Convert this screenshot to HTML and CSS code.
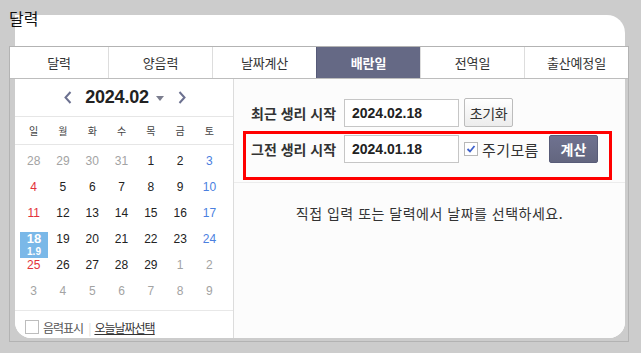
FILE: index.html
```html
<!DOCTYPE html>
<html lang="ko">
<head>
<meta charset="utf-8">
<title>달력</title>
<link rel="stylesheet" href="styles.css">
</head>
<body>
<div class="window">
  <h1 class="title">달력</h1>
  <div class="frame">
    <ul class="tabs">
      <li class="first">달력</li>
      <li>양음력</li>
      <li>날짜계산</li>
      <li class="on">배란일</li>
      <li>전역일</li>
      <li>출산예정일</li>
    </ul>
    <div class="body">
      <div class="cal">
        <div class="cal-head">
          <span class="nav"><svg width="8" height="13" viewBox="0 0 8 13"><polyline points="6.5,1 1.5,6.5 6.5,12" fill="none" stroke="#6c7190" stroke-width="2"/></svg></span>
          <span class="ym">2024.02</span>
          <span class="caret"></span>
          <span class="nav"><svg width="8" height="13" viewBox="0 0 8 13"><polyline points="1.5,1 6.5,6.5 1.5,12" fill="none" stroke="#6c7190" stroke-width="2"/></svg></span>
        </div>
        <div class="dow">
          <span>일</span><span>월</span><span>화</span><span>수</span><span>목</span><span>금</span><span>토</span>
        </div>
        <div class="days">
          <span class="o">28</span><span class="o">29</span><span class="o">30</span><span class="o">31</span><span>1</span><span>2</span><span class="sat">3</span>
          <span class="sun">4</span><span>5</span><span>6</span><span>7</span><span>8</span><span>9</span><span class="sat">10</span>
          <span class="sun">11</span><span>12</span><span>13</span><span>14</span><span>15</span><span>16</span><span class="sat">17</span>
          <span class="sel"><b>18</b><i>1.9</i></span><span>19</span><span>20</span><span>21</span><span>22</span><span>23</span><span class="sat">24</span>
          <span class="sun">25</span><span>26</span><span>27</span><span>28</span><span>29</span><span class="o">1</span><span class="o">2</span>
          <span class="o">3</span><span class="o">4</span><span class="o">5</span><span class="o">6</span><span class="o">7</span><span class="o">8</span><span class="o">9</span>
        </div>
        <div class="cal-foot">
          <span class="chk"></span>
          <span class="lunar">음력표시</span>
          <span class="bar">|</span>
          <span class="today">오늘날짜선택</span>
        </div>
      </div>
      <div class="calc">
        <div class="form">
          <div class="row r1">
            <span class="lbl">최근 생리 시작</span>
            <span class="inp">2024.02.18</span>
            <span class="btn">초기화</span>
          </div>
          <div class="mark">
            <div class="row r2">
              <span class="lbl">그전 생리 시작</span>
              <span class="inp">2024.01.18</span>
              <span class="chk2"><svg width="10" height="10" viewBox="0 0 10 10"><polyline points="1.5,5 4,7.5 8.5,2" fill="none" stroke="#3f62cc" stroke-width="1.8"/></svg></span>
              <span class="unk">주기모름</span>
              <span class="go">계산</span>
            </div>
          </div>
        </div>
        <p class="msg">직접 입력 또는 달력에서 날짜를 선택하세요.</p>
      </div>
    </div>
  </div>
</div>
</body>
</html>
```
FILE: styles.css
```css
html, body {
  margin: 0;
  padding: 0;
}
body {
  background: #cccccc;
  width: 641px;
  height: 353px;
  overflow: hidden;
  font-family: "Noto Sans CJK KR", "Liberation Sans", sans-serif;
  color: #333;
}
.window {
  position: relative;
  height: 353px;
  box-sizing: border-box;
  padding: 8px 0 0 9px;
}
.window::before {
  content: "";
  position: absolute;
  left: 15px;
  top: 15px;
  width: 610px;
  height: 323px;
  background: #fff;
  border-radius: 0 18px 16px 16px;
}
.title {
  position: relative;
  margin: 0;
  font-size: 16px;
  font-weight: normal;
  line-height: 20px;
  color: #111;
}
.frame {
  position: relative;
  margin-top: 18px;
  width: 620px;
  height: 296px;
  box-sizing: border-box;
  border: 1px solid #b3b3b3;
  display: flex;
  flex-direction: column;
}
.tabs {
  list-style: none;
  margin: 0;
  padding: 0;
  display: flex;
  height: 32px;
  box-sizing: border-box;
  border-bottom: 1px solid #bdbdbd;
  background: #fff;
}
.tabs li {
  width: 104px;
  box-sizing: border-box;
  display: flex;
  align-items: center;
  justify-content: center;
  font-size: 13px;
  color: #333;
  border-left: 1px solid #dddddd;
  letter-spacing: -0.2px;
}
.tabs li.first {
  width: 98px;
  border-left: 0;
}
.tabs li.on {
  background: #656985;
  color: #fff;
  font-weight: bold;
  border-left-color: #565a78;
}
.body {
  flex: 1;
  display: flex;
  padding: 0 3px 3px 5px;
}
.cal {
  width: 219px;
  flex: none;
  box-sizing: border-box;
  border-right: 1px solid #dcdcdc;
  background: #fff;
  border-bottom-left-radius: 16px;
  display: flex;
  flex-direction: column;
}
.cal-head {
  height: 38px;
  box-sizing: border-box;
  border-bottom: 1px solid #e6e6e6;
  display: flex;
  align-items: center;
  justify-content: center;
  padding-left: 2px;
}
.nav {
  display: flex;
}
.ym {
  font-family: "Liberation Sans", sans-serif;
  font-weight: bold;
  font-size: 18px;
  color: #222;
  margin: 0 7px 0 13px;
  letter-spacing: -0.2px;
}
.caret {
  width: 0;
  height: 0;
  border-top: 5px solid #7b7d8e;
  border-left: 4.5px solid transparent;
  border-right: 4.5px solid transparent;
  margin: 2px 14px 0 0;
}
.dow {
  height: 28px;
  box-sizing: border-box;
  border-bottom: 1px solid #e6e6e6;
  display: grid;
  grid-template-columns: repeat(7, 29.3px);
  padding-left: 4px;
  align-items: center;
  font-size: 10px;
  color: #444;
  text-align: center;
}
.days {
  display: grid;
  grid-template-columns: repeat(7, 29.3px);
  grid-auto-rows: 26px;
  padding: 3px 0 6px 4px;
}
.days span {
  padding-top: 6px;
  text-align: center;
  font-family: "Liberation Sans", sans-serif;
  font-size: 12px;
  line-height: 14px;
  color: #222;
}
.days span.o { color: #a3a3a3; }
.days span.sun { color: #e2323a; }
.days span.sat { color: #4b7fdf; }
.days span.sel {
  padding: 0;
  margin: 6px 0 0 1px;
  width: 28px;
  height: 26px;
  background: #7ab8e8;
  color: #fff;
  font-weight: bold;
  display: flex;
  flex-direction: column;
  align-items: center;
}
.sel b {
  font-size: 13px;
  line-height: 14px;
}
.sel i {
  font-style: normal;
  font-size: 10px;
  line-height: 12px;
}
.cal-foot {
  flex: 1;
  border-top: 1px solid #e8e8e8;
  display: flex;
  align-items: center;
  padding: 5px 0 0 10px;
  font-size: 12px;
  letter-spacing: -1px;
}
.chk {
  width: 14px;
  height: 14px;
  box-sizing: border-box;
  border: 1px solid #bdbdbd;
  background: #fff;
  margin-right: 4px;
}
.lunar { color: #555; }
.bar {
  color: #dcdcdc;
  margin: 0 4px 0 5px;
}
.today {
  color: #333;
  text-decoration: underline;
}
.calc {
  flex: 1;
  min-width: 0;
  background: #fcfcfc;
  border-bottom-right-radius: 16px;
}
.form {
  padding: 19px 0 2px;
  border-bottom: 1px solid #ececec;
}
.row {
  display: flex;
  align-items: center;
}
.r1 {
  height: 29px;
  padding-left: 17px;
}
.lbl {
  width: 93px;
  flex: none;
  font-size: 14px;
  font-weight: bold;
  color: #333;
  letter-spacing: 0;
  white-space: nowrap;
}
.inp {
  width: 115px;
  flex: none;
  height: 28px;
  box-sizing: border-box;
  border: 1px solid #c6c6c6;
  background: #fff;
  display: flex;
  align-items: center;
  padding-left: 7px;
  font-family: "Liberation Sans", sans-serif;
  font-weight: bold;
  font-size: 14px;
  color: #222;
}
.btn {
  margin-left: 5px;
  width: 49px;
  height: 29px;
  box-sizing: border-box;
  border: 1px solid #bcbcbc;
  border-radius: 2px;
  background: linear-gradient(#ffffff, #ececec);
  display: flex;
  align-items: center;
  justify-content: center;
  font-size: 14px;
  letter-spacing: -0.3px;
  color: #333;
}
.mark {
  margin: 4px 0 0 9px;
  width: 369px;
  height: 49px;
  box-sizing: border-box;
  border: 3px solid #ff0000;
  padding: 1px 0 0 5px;
}
.r2 {
  height: 28px;
}
.chk2 {
  margin-left: 5px;
  width: 14px;
  height: 14px;
  box-sizing: border-box;
  border: 1px solid #b8b8b8;
  background: #fff;
  display: flex;
  align-items: center;
  justify-content: center;
}
.unk {
  margin-left: 4px;
  font-size: 15px;
  letter-spacing: 0.4px;
  color: #333;
}
.go {
  margin-left: auto;
  margin-right: 11px;
  width: 49px;
  height: 28px;
  box-sizing: border-box;
  border: 1px solid #585c78;
  border-radius: 2px;
  background: linear-gradient(#6f7290, #63667f);
  display: flex;
  align-items: center;
  justify-content: center;
  color: #fff;
  font-weight: bold;
  font-size: 14px;
}
.msg {
  margin: 21px 0 0;
  text-align: center;
  font-size: 14px;
  line-height: 18px;
  color: #333;
  letter-spacing: 0.5px;
  white-space: nowrap;
}
```
